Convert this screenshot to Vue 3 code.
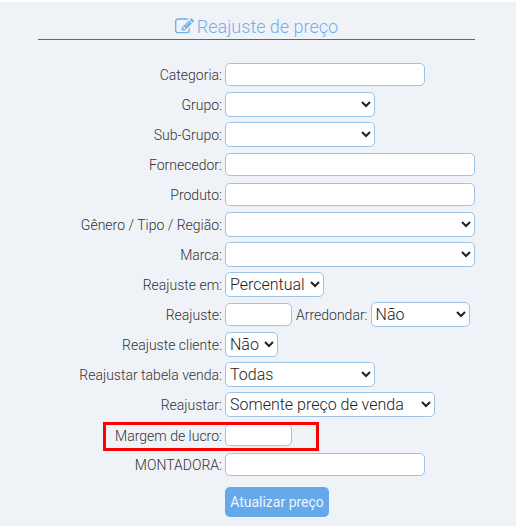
<script setup>
const plain = (label, size) => ({ label, type: 'input', size })
const pick = (label, size, value = '') => ({ label, type: 'select', size, value })

const rows = [
  plain('Categoria:', 'lg'),
  pick('Grupo:', 'md'),
  pick('Sub-Grupo:', 'md'),
  plain('Fornecedor:', 'xl'),
  plain('Produto:', 'xl'),
  pick('Gênero / Tipo / Região:', 'xl'),
  pick('Marca:', 'xl'),
  pick('Reajuste em:', 'auto', 'Percentual'),
  { ...plain('Reajuste:', 'sm'), extra: { label: 'Arredondar:', value: 'Não' } },
  pick('Reajuste cliente:', 'auto', 'Não'),
  pick('Reajustar tabela venda:', 'md', 'Todas'),
  pick('Reajustar:', 'wide', 'Somente preço de venda'),
  { ...plain('Margem de lucro:', 'sm'), marked: true },
  plain('MONTADORA:', 'lg')
]
</script>

<template>
  <div class="page">
    <h3 class="title">
      <svg class="title-icon" viewBox="0 0 1792 1792" aria-hidden="true">
        <path fill="currentColor" d="M888 1184l116-116-152-152-116 116v56h96v96h56zm440-720q-16-16-33 1l-350 350q-17 17-1 33t33-1l350-350q17-17 1-33zm80 594v190q0 119-84.500 203.500t-203.500 84.500h-832q-119 0-203.500-84.500t-84.500-203.500v-832q0-119 84.500-203.500t203.500-84.500h832q63 0 117 25 15 7 18 23 3 17-9 29l-49 49q-14 14-32 8-23-6-45-6h-832q-66 0-113 47t-47 113v832q0 66 47 113t113 47h832q66 0 113-47t47-113v-126q0-13 9-22l64-64q15-15 35-7t20 29zm-96-738l288 288-672 672h-288v-288zm444 132l-92 92-288-288 92-92q28-28 68-28t68 28l152 152q28 28 28 68t-28 68z" />
      </svg>
      Reajuste de preço
    </h3>

    <form class="form" @submit.prevent>
      <div v-for="row in rows" :key="row.label" class="row" :class="{ marked: row.marked }">
        <span v-if="row.marked" class="mark"></span>
        <label class="label">{{ row.label }}</label>
        <input v-if="row.type === 'input'" class="field" :class="row.size" type="text" />
        <select v-else class="field pick" :class="row.size">
          <option>{{ row.value }}</option>
        </select>
        <template v-if="row.extra">
          <label class="label-extra">{{ row.extra.label }}</label>
          <select class="field pick extra">
            <option>{{ row.extra.value }}</option>
          </select>
        </template>
      </div>
      <div class="actions">
        <button class="submit" type="submit">Atualizar preço</button>
      </div>
    </form>
  </div>
</template>

<style scoped>
.page {
  width: 516px;
  height: 524px;
  margin-top: 2px;
  padding: 12px 41px 0 38px;
  box-sizing: border-box;
  background: #eff2f7;
  font-family: Roboto, "Liberation Sans", sans-serif;
  font-weight: 300;
  color: #333;
}

.title {
  display: flex;
  justify-content: center;
  align-items: center;
  gap: 3px;
  height: 25px;
  margin: 0;
  border-bottom: 1px solid #666;
  font-size: 18px;
  font-weight: 300;
  color: #6fb0ec;
}

.title-icon {
  width: 19px;
  height: 19px;
  margin-top: -1px;
}

.form {
  margin-top: 19px;
}

.row {
  position: relative;
  display: flex;
  align-items: center;
  height: 30px;
}

.label {
  width: 184px;
  margin: 2px 3px 0 0;
  text-align: right;
  font-size: 14px;
}

.label-extra {
  margin: 2px 3px 0 4px;
  font-size: 14px;
}

.field {
  box-sizing: border-box;
  height: 23px;
  padding: 1px 2px;
  border: 1px solid #9dc3e6;
  border-radius: 5px;
  background: #fff;
  font-family: inherit;
  font-size: 16px;
  font-weight: 300;
  color: #222;
  outline: none;
}

.pick {
  height: 25px;
  padding: 0 2px 0 0;
}

.sm { width: 67px; }
.md { width: 150px; }
.lg { width: 200px; }
.wide { width: 210px; }
.xl { width: 250px; }
.extra { width: 99px; }

.marked .label {
  margin-top: 4px;
}

.marked .field {
  height: 22px;
  margin-top: 2px;
}

/* red annotation around the margem row */
.mark {
  position: absolute;
  left: 65px;
  top: 3px;
  width: 216px;
  height: 29px;
  box-sizing: border-box;
  border: 3px solid #f00;
}

.actions {
  margin: 8px 0 0 187px;
}

.submit {
  width: 104px;
  height: 30px;
  padding: 0;
  border: none;
  border-radius: 5px;
  background: #65a9ea;
  font-family: inherit;
  font-size: 14px;
  font-weight: 400;
  color: #eef5fd;
}
</style>
